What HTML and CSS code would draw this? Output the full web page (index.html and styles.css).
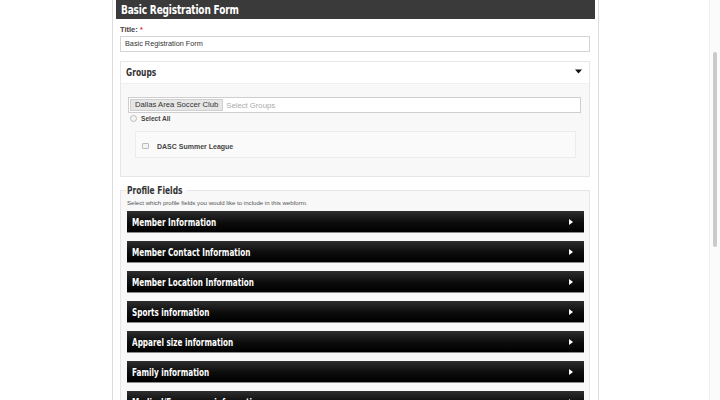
FILE: index.html
```html
<!DOCTYPE html>
<html>
<head>
<meta charset="utf-8">
<link rel="stylesheet" href="styles.css">
</head>
<body>
<div class="page">
  <div class="column">
    <h1 class="title-bar"><span class="cond">Basic Registration Form</span></h1>
    <div class="form">
      <label class="label">Title: <span class="req">*</span></label>
      <div class="input">Basic Registration Form</div>

      <div class="panel">
        <div class="panel-head">
          <span class="panel-title cond">Groups</span>
          <svg class="caret" width="7" height="5" viewBox="0 0 7 5"><path d="M0 0.5h7L3.5 4.5z" fill="#111"/></svg>
        </div>
        <div class="panel-body">
          <div class="select">
            <span class="tag">Dallas Area Soccer Club</span>
            <span class="placeholder">Select Groups</span>
          </div>
          <div class="select-all"><span class="radio"></span><span>Select All</span></div>
          <div class="child">
            <span class="check"></span><span class="child-label">DASC Summer League</span>
          </div>
        </div>
      </div>

      <fieldset class="fields">
        <legend class="legend"><span class="cond">Profile Fields</span></legend>
        <p class="desc">Select which profile fields you would like to include in this webform.</p>
        <div class="bars">
          <div class="bar"><span class="cond">Member Information</span><svg class="arrow" width="4" height="6" viewBox="0 0 4 6"><path d="M0 0L4 3L0 6z" fill="#fff"/></svg></div>
          <div class="bar"><span class="cond">Member Contact Information</span><svg class="arrow" width="4" height="6" viewBox="0 0 4 6"><path d="M0 0L4 3L0 6z" fill="#fff"/></svg></div>
          <div class="bar"><span class="cond">Member Location Information</span><svg class="arrow" width="4" height="6" viewBox="0 0 4 6"><path d="M0 0L4 3L0 6z" fill="#fff"/></svg></div>
          <div class="bar"><span class="cond">Sports information</span><svg class="arrow" width="4" height="6" viewBox="0 0 4 6"><path d="M0 0L4 3L0 6z" fill="#fff"/></svg></div>
          <div class="bar"><span class="cond">Apparel size information</span><svg class="arrow" width="4" height="6" viewBox="0 0 4 6"><path d="M0 0L4 3L0 6z" fill="#fff"/></svg></div>
          <div class="bar"><span class="cond">Family information</span><svg class="arrow" width="4" height="6" viewBox="0 0 4 6"><path d="M0 0L4 3L0 6z" fill="#fff"/></svg></div>
          <div class="bar bar-last"><span class="cond">Medical/Emergency information</span><svg class="arrow" width="4" height="6" viewBox="0 0 4 6"><path d="M0 0L4 3L0 6z" fill="#fff"/></svg></div>
        </div>
      </fieldset>
    </div>
  </div>
  <div class="scroll"><div class="thumb"></div></div>
</div>
</body>
</html>
```

FILE: styles.css
```css
html, body {
  margin: 0;
  padding: 0;
  background: #fff;
  height: 400px;
  overflow: hidden;
}
body {
  font-family: "Liberation Sans", Arial, sans-serif;
  color: #333;
}
.page {
  display: flex;
  height: 400px;
}
.column {
  margin-left: 112px;
  width: 485px;
  border-left: 1px solid #dcdcdc;
  border-right: 1px solid #dcdcdc;
  height: 400px;
  overflow: hidden;
  flex: none;
}
.cond {
  display: inline-block;
  font-family: "DejaVu Sans", sans-serif;
  font-weight: bold;
  font-stretch: condensed;
  transform-origin: left center;
  white-space: nowrap;
}
.title-bar {
  margin: 0 3px;
  height: 19px;
  background: #3a3a3a;
  color: #fff;
  font-size: 12.5px;
  line-height: 19px;
  padding-left: 5px;
}
.title-bar .cond { transform: scaleX(0.8); letter-spacing: -0.2px; }
.form {
  margin: 0 8px 0 7px;
}
.label {
  display: block;
  margin-top: 6px;
  font-size: 7.5px;
  line-height: 9px;
  font-weight: bold;
  color: #444;
}
.req { color: #d33; }
.input {
  margin-top: 2px;
  height: 14px;
  border: 1px solid #d4d4d4;
  font-size: 7.3px;
  line-height: 14px;
  padding-left: 4px;
  color: #333;
}
.panel {
  margin-top: 9px;
  border: 1px solid #e6e6e6;
}
.panel-head {
  height: 21px;
  background: #fff;
  display: flex;
  align-items: center;
  justify-content: space-between;
  padding: 0 7px 0 5px;
}
.panel-title {
  font-size: 11px;
  color: #333;
  transform: scaleX(0.76);
  margin-top: -1px;
}
.caret { margin-bottom: 2px; }
.panel-body {
  background: #f8f8f8;
  border-top: 1px solid #efefef;
  padding: 13px 8px 18px 7px;
}
.select {
  height: 14px;
  background: #fff;
  border: 1px solid #cfcfcf;
  display: flex;
  align-items: center;
  padding-left: 1px;
  gap: 3px;
  font-size: 7.7px;
}
.tag {
  background: #e6e6e6;
  border: 1px solid #cfcfcf;
  height: 10px;
  line-height: 10px;
  padding: 0 4px;
  color: #333;
}
.placeholder { color: #aaa; }
.select-all {
  display: flex;
  align-items: center;
  gap: 4px;
  height: 9px;
  margin-top: 1px;
  padding-left: 2px;
  font-size: 6.6px;
  font-weight: bold;
  color: #444;
}
.radio {
  width: 5px;
  height: 5px;
  border: 1px solid #bbb;
  border-radius: 50%;
  background: #f4f4f4;
}
.child {
  margin: 8px 5px 0 7px;
  height: 27px;
  border: 1px solid #ececec;
  background: #fafafa;
  display: flex;
  align-items: center;
  padding-left: 6px;
  padding-top: 3px;
  box-sizing: border-box;
  font-size: 7px;
  font-weight: bold;
  color: #444;
}
.check {
  width: 5px;
  height: 4px;
  border: 1px solid #bbb;
  border-radius: 1px;
  background: #f4f4f4;
  margin-right: 8px;
}
.fields {
  margin: 7px 0 0 0;
  border: 1px solid #e6e6e6;
  background: #f8f8f8;
  padding: 0 5px 0 6px;
  min-width: 0;
}
.legend {
  font-size: 11px;
  color: #333;
  padding: 0 1px;
  margin-left: -1px;
}
.legend .cond { transform: scaleX(0.76); margin-right: -14px; }
.desc {
  margin: 2px 0 0 0;
  font-size: 6.1px;
  line-height: 8px;
  color: #555;
}
.bars {
  display: flex;
  flex-direction: column;
  gap: 8px;
  margin-top: 4px;
}
.bar {
  height: 21px;
  background: linear-gradient(#2e2e2e, #0c0c0c 55%, #000);
  border-bottom: 1px solid #8a8a8a;
  display: flex;
  align-items: center;
  justify-content: space-between;
  padding: 0 11px 0 5px;
  color: #fff;
  flex: none;
}
.bar .cond {
  font-size: 10.5px;
  transform: scaleX(0.77);
}
.scroll {
  margin-left: auto;
  width: 10px;
  border-left: 1px solid #efefef;
  background: #fbfbfb;
  display: flex;
  justify-content: center;
}
.thumb {
  margin-top: 52px;
  width: 4px;
  height: 195px;
  border-radius: 2px;
  background: #cacaca;
}
```
